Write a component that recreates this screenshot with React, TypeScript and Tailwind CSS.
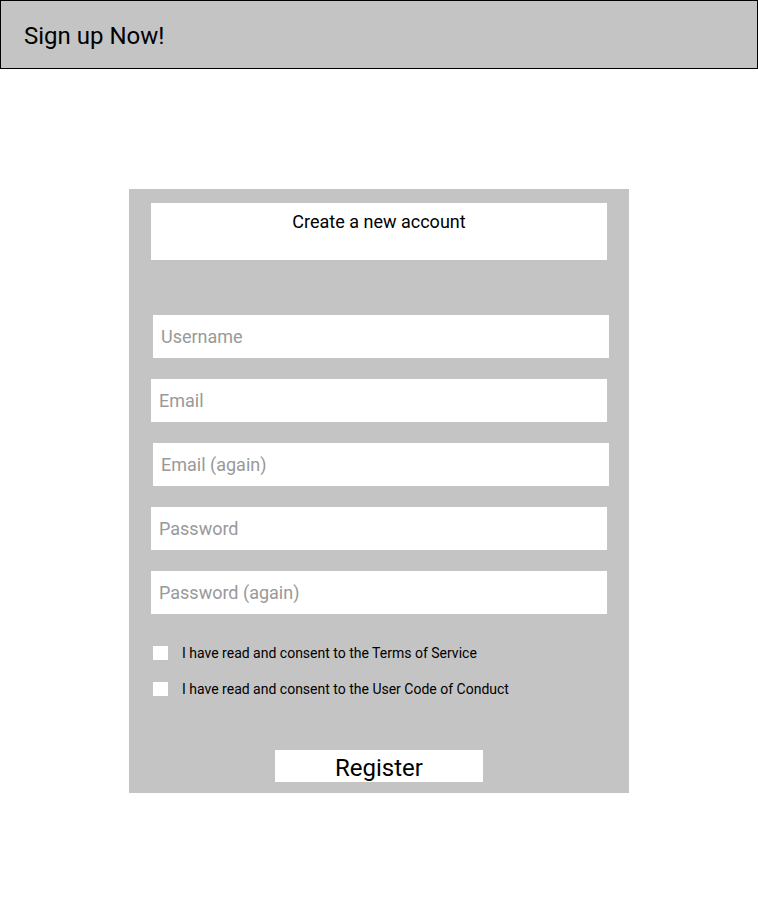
import React from 'react';

const fields = [
  { placeholder: 'Username', shift: true },
  { placeholder: 'Email', shift: false },
  { placeholder: 'Email (again)', shift: true },
  { placeholder: 'Password', shift: false, type: 'password' },
  { placeholder: 'Password (again)', shift: false, type: 'password' },
];

const consents = [
  'I have read and consent to the Terms of Service',
  'I have read and consent to the User Code of Conduct',
];

export default function App() {
  return (
    <div className="min-h-[905px] w-[758px] bg-white font-['Roboto',sans-serif] text-black">
      {/* Header */}
      <div className="flex h-[69px] items-center border border-black bg-[#c4c4c4] pl-[23px] pt-[2px]">
        <h1 className="text-[24px] leading-none">Sign up Now!</h1>
      </div>

      {/* Sign up card */}
      <div className="ml-[129px] mt-[120px] flex w-[500px] flex-col bg-[#c4c4c4] pb-[11px] pt-[14px]">
        <div className="ml-[22px] flex h-[57px] w-[456px] justify-center bg-white pt-[9px]">
          <span className="text-[18px] leading-[20px]">Create a new account</span>
        </div>

        <div className="mt-[55px] flex flex-col gap-[21px]">
          {fields.map((f) => (
            <input
              key={f.placeholder}
              type={f.type ?? 'text'}
              placeholder={f.placeholder}
              className={
                (f.shift ? 'ml-[24px] ' : 'ml-[22px] ') +
                'h-[43px] w-[456px] bg-white px-[8px] text-[18px] outline-none placeholder:text-[#999999]'
              }
            />
          ))}
        </div>

        <div className="ml-[24px] mt-[31px] flex flex-col gap-[21px]">
          {consents.map((c) => (
            <label key={c} className="flex h-[15px] items-center">
              <span className="h-[14px] w-[15px] bg-white" />
              <span className="ml-[14px] pt-[1px] text-[14px] leading-none">{c}</span>
            </label>
          ))}
        </div>

        <button className="ml-[146px] mt-[54px] flex h-[32px] w-[208px] items-center justify-center bg-white pt-[4px] text-[24px] leading-none">
          Register
        </button>
      </div>
    </div>
  );
}
